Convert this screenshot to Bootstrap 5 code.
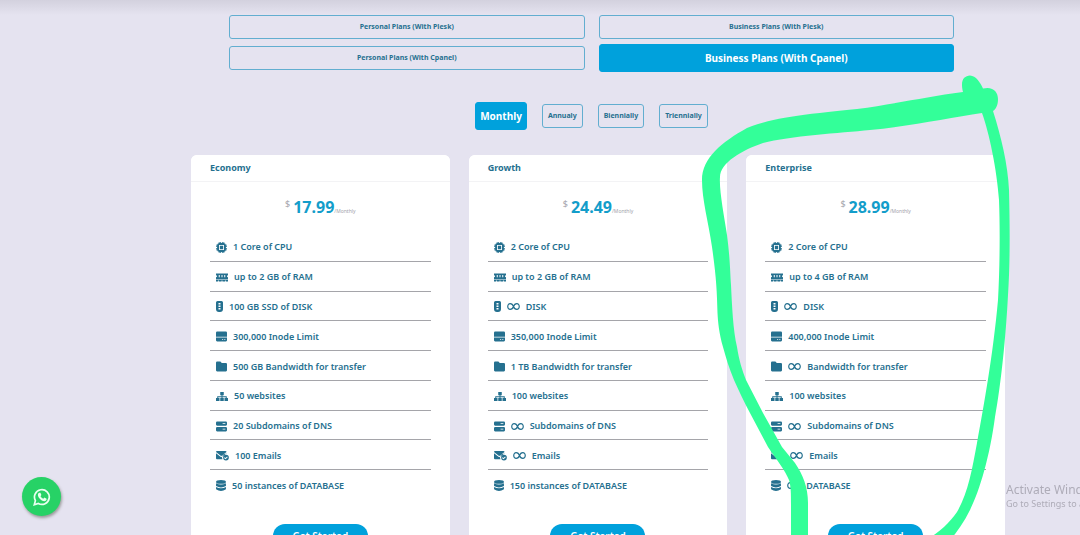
<!DOCTYPE html>
<html lang="en">
<head>
<meta charset="utf-8">
<meta name="viewport" content="width=device-width, initial-scale=1">
<title>Hosting plans</title>
<link href="https://cdn.jsdelivr.net/npm/bootstrap@5.3.0/dist/css/bootstrap.min.css" rel="stylesheet">
<style>
  :root { --brand: #00a1dc; --ink: #25708f; --page: #e5e3f0; }
  body { background: var(--page); color: var(--ink); font-family: "Noto Sans", "Open Sans", sans-serif; font-size: 9px; line-height: 12px; overflow-x: hidden; }
  .top-shade { height: 15px; background: linear-gradient(#d3d1de, var(--page)); }
  .plans { padding-left: 191px; padding-right: 75px; }
  .plan-types { display: grid; grid-template-columns: 1fr 1fr; column-gap: 14px; row-gap: 5px; padding: 0 51px 0 38px; align-items: center; }
  .pick { --bs-btn-color: var(--ink); --bs-btn-border-color: #62aed0; --bs-btn-hover-bg: var(--brand); --bs-btn-hover-color: #fff; --bs-btn-padding-x: 5px; --bs-btn-padding-y: 0px; --bs-btn-border-radius: 3px; --bs-btn-font-size: 7px; --bs-btn-font-weight: 700; --bs-btn-line-height: 22px; --bs-btn-active-bg: var(--brand); --bs-btn-active-border-color: var(--brand); --bs-btn-active-color: #fff; }
  .pick.active { --bs-btn-font-size: 10px; --bs-btn-line-height: 26px; --bs-btn-padding-x: 4px; }
  .periods { gap: 15px; margin: 30px 13px 25px 0; }
  .plan-grid { column-gap: 19px; display: grid; grid-template-columns: repeat(3, 1fr); }
  .plan { --bs-card-border-width: 0; --bs-card-border-radius: 6px; --bs-card-inner-border-radius: 6px; --bs-card-cap-bg: #fff; --bs-card-cap-padding-x: 19px; --bs-card-cap-padding-y: 7px; --bs-card-spacer-x: 19px; --bs-card-spacer-y: 0px; }
  .plan .card-header { border-bottom: 1px solid #f3f3f5; }
  .plan h2 { font-size: 9px; line-height: 12px; font-weight: 700; color: var(--ink); }
  .price { height: 50px; color: #a3a3ab; }
  .price strong { font-size: 16px; line-height: 20px; color: #139dca; margin-left: 3px; }
  .price .coin { font-size: 9px; align-self: flex-start; margin-top: 16px; }
  .price .per { font-size: 5px; }
  .features { height: 267px; font-weight: 600; color: var(--ink); }
  .features li { display: flex; flex: 1 1 0; align-items: center; gap: 6px; padding: 2px 0 0 6px; border-bottom: 1px solid #a5a5aa; white-space: nowrap; }
  .features li:last-child { border-bottom: 0; }
  .features svg { height: 11px; flex: none; fill: currentColor; }
  .start { --bs-btn-bg: var(--brand); --bs-btn-color: #fff; --bs-btn-border-width: 0; --bs-btn-border-radius: 12px; --bs-btn-font-size: 10px; --bs-btn-font-weight: 600; --bs-btn-line-height: 24px; --bs-btn-padding-y: 0px; --bs-btn-padding-x: 4px; --bs-btn-hover-bg: #0088bd; --bs-btn-hover-color: #fff; width: 95px; margin: 25px auto 24px; }
  .marker { position: absolute; left: 0; top: 0; pointer-events: none; z-index: 5; }
  .chat { position: fixed; left: 22px; bottom: 19px; width: 39px; height: 39px; background: #27d266; box-shadow: 1px 2px 3px #999; z-index: 6; }
  .notice { position: fixed; left: 1006px; bottom: 25px; color: #aeacb8; white-space: nowrap; font-size: 9px; }
  .notice b { display: block; font-size: 12px; line-height: 16px; font-weight: 400; }
</style>
</head>
<body>
<svg width="0" height="0" class="d-none">
  <symbol id="cpu" viewBox="0 0 20 20"><path fill-rule="evenodd" d="M5 0h1.500v2h1.200V0h1.500v2h1.600V0h1.500v2h1.200V0H15v2.200A3 3 0 0 1 17.800 5H20v1.500h-2v1.200h2v1.500h-2v1.600h2v1.500h-2v1.200h2V15h-2.200A3 3 0 0 1 15 17.800V20h-1.500v-2h-1.200v2h-1.500v-2H9.200v2H7.700v-2H6.500v2H5v-2.200A3 3 0 0 1 2.200 15H0v-1.500h2v-1.200H0v-1.500h2V9.200H0V7.700h2V6.500H0V5h2.200A3 3 0 0 1 5 2.200zM5.500 5.500v9h9v-9zM7 7h6v6H7z"/></symbol>
  <symbol id="ram" viewBox="0 0 24 20"><path fill-rule="evenodd" d="M0 2h24v3.500a2 2 0 0 0 0 4V13H0V9.500a2 2 0 0 0 0-4zM5.500 5v4.500h2V5zM11 5v4.500h2V5zM16.500 5v4.500h2V5zM0 14h24v4h-4v-2h-1.500v2h-5.700v-2h-1.600v2H5.500v-2H4v2H0z"/></symbol>
  <symbol id="disk" viewBox="0 0 14 22"><path fill-rule="evenodd" d="M3 0h8a3 3 0 0 1 3 3v13a6 6 0 0 1-6 6H6a6 6 0 0 1-6-6V3a3 3 0 0 1 3-3zM5 4v3h4V4zM5 9v3h4V9zM5 14v3h4v-3z"/></symbol>
  <symbol id="inode" viewBox="0 0 20 20"><path fill-rule="evenodd" d="M2 1h16a2 2 0 0 1 2 2v7.500H0V3a2 2 0 0 1 2-2zM0 12h20v5a2 2 0 0 1-2 2H2a2 2 0 0 1-2-2zM11 14.500V16h2v-1.500zM15 14.500V16h2v-1.500z"/></symbol>
  <symbol id="folder" viewBox="0 0 20 20"><path d="M2 1h6l2.500 2.500H18a2 2 0 0 1 2 2V17a2 2 0 0 1-2 2H2a2 2 0 0 1-2-2V3a2 2 0 0 1 2-2z"/></symbol>
  <symbol id="sites" viewBox="0 0 24 20"><path d="M8.500 1h7v6.500H13V9.500h8.500v3.500H24v6h-7v-6h2.500v-1.500H13V13h2.500v6h-7v-6H11v-1.500H4.500V13H7v6H0v-6h2.500V9.500H11v-2H8.500z"/></symbol>
  <symbol id="dns" viewBox="0 0 20 20"><path fill-rule="evenodd" d="M2 1h16a2 2 0 0 1 2 2v3.500a2 2 0 0 1-2 2H2a2 2 0 0 1-2-2V3a2 2 0 0 1 2-2zM12 4v1.500h5V4zM2 11h16a2 2 0 0 1 2 2v4a2 2 0 0 1-2 2H2a2 2 0 0 1-2-2v-4a2 2 0 0 1 2-2zM12 14v1.500h5V14z"/></symbol>
  <symbol id="mail" viewBox="0 0 26 20"><path d="M2 1h17a2 2 0 0 1 2 2l-9.500 7.500a2 2 0 0 1-2 0L0 3a2 2 0 0 1 2-2z"/><path d="M0 5.500l9 7q1.500 1 3 0l9-6.500v1a7 7 0 0 0-8 10.500H2a2 2 0 0 1-2-2z"/><path fill-rule="evenodd" d="M20 8.500a5.700 5.700 0 1 1 0 11.400 5.700 5.700 0 0 1 0-11.400zM17.500 13.500L16 15l3 2.700 4.500-4.200-1.300-1.300-3.200 2.800z"/></symbol>
  <symbol id="db" viewBox="0 0 18 20"><ellipse cx="9" cy="3.500" rx="9" ry="3.500"/><path d="M0 5.800q9 5 18 0V11q-9 5-18 0zM0 12.500q9 5 18 0v4.200q-9 6.500-18 0z"/></symbol>
  <symbol id="inf" viewBox="0 0 26 20"><path fill="none" stroke="currentColor" stroke-width="2.400" d="M13 10C10.500 2.500 1.500 2 1.500 10S10.500 17.500 13 10 24.500 2 24.500 10 15.500 17.500 13 10z"/></symbol>
</svg>

<div class="top-shade"></div>
<main class="plans">
  <div class="plan-types">
    <button type="button" class="btn pick">Personal Plans (With Plesk)</button>
    <button type="button" class="btn pick">Business Plans (With Plesk)</button>
    <button type="button" class="btn pick">Personal Plans (With Cpanel)</button>
    <button type="button" class="btn pick active">Business Plans (With Cpanel)</button>
  </div>
  <div class="periods d-flex justify-content-center align-items-center">
    <button type="button" class="btn pick active">Monthly</button>
    <button type="button" class="btn pick">Annualy</button>
    <button type="button" class="btn pick">Biennially</button>
    <button type="button" class="btn pick">Triennially</button>
  </div>
  <div class="plan-grid">
    <section class="card plan">
      <div class="card-header"><h2 class="m-0">Economy</h2></div>
      <div class="card-body d-flex flex-column">
        <div class="price d-flex justify-content-center align-items-center"><span class="coin">$</span><strong>17.99</strong><span class="per mt-2">/Monthly</span></div>
        <ul class="features list-unstyled d-flex flex-column m-0">
          <li><svg width="11"><use href="#cpu"/></svg>1 Core of CPU</li>
          <li><svg width="12"><use href="#ram"/></svg>up to 2 GB of RAM</li>
          <li><svg width="7"><use href="#disk"/></svg>100 GB SSD of DISK</li>
          <li><svg width="11"><use href="#inode"/></svg>300,000 Inode Limit</li>
          <li><svg width="11"><use href="#folder"/></svg>500 GB Bandwidth for transfer</li>
          <li><svg width="12"><use href="#sites"/></svg>50 websites</li>
          <li><svg width="11"><use href="#dns"/></svg>20 Subdomains of DNS</li>
          <li><svg width="13"><use href="#mail"/></svg>100 Emails</li>
          <li><svg width="10"><use href="#db"/></svg>50 instances of DATABASE</li>
        </ul>
        <button type="button" class="btn start">Get Started</button>
      </div>
    </section>
    <section class="card plan">
      <div class="card-header"><h2 class="m-0">Growth</h2></div>
      <div class="card-body d-flex flex-column">
        <div class="price d-flex justify-content-center align-items-center"><span class="coin">$</span><strong>24.49</strong><span class="per mt-2">/Monthly</span></div>
        <ul class="features list-unstyled d-flex flex-column m-0">
          <li><svg width="11"><use href="#cpu"/></svg>2 Core of CPU</li>
          <li><svg width="12"><use href="#ram"/></svg>up to 2 GB of RAM</li>
          <li><svg width="7"><use href="#disk"/></svg><svg width="13"><use href="#inf"/></svg>DISK</li>
          <li><svg width="11"><use href="#inode"/></svg>350,000 Inode Limit</li>
          <li><svg width="11"><use href="#folder"/></svg>1 TB Bandwidth for transfer</li>
          <li><svg width="12"><use href="#sites"/></svg>100 websites</li>
          <li><svg width="11"><use href="#dns"/></svg><svg width="13"><use href="#inf"/></svg>Subdomains of DNS</li>
          <li><svg width="13"><use href="#mail"/></svg><svg width="13"><use href="#inf"/></svg>Emails</li>
          <li><svg width="10"><use href="#db"/></svg>150 instances of DATABASE</li>
        </ul>
        <button type="button" class="btn start">Get Started</button>
      </div>
    </section>
    <section class="card plan">
      <div class="card-header"><h2 class="m-0">Enterprise</h2></div>
      <div class="card-body d-flex flex-column">
        <div class="price d-flex justify-content-center align-items-center"><span class="coin">$</span><strong>28.99</strong><span class="per mt-2">/Monthly</span></div>
        <ul class="features list-unstyled d-flex flex-column m-0">
          <li><svg width="11"><use href="#cpu"/></svg>2 Core of CPU</li>
          <li><svg width="12"><use href="#ram"/></svg>up to 4 GB of RAM</li>
          <li><svg width="7"><use href="#disk"/></svg><svg width="13"><use href="#inf"/></svg>DISK</li>
          <li><svg width="11"><use href="#inode"/></svg>400,000 Inode Limit</li>
          <li><svg width="11"><use href="#folder"/></svg><svg width="13"><use href="#inf"/></svg>Bandwidth for transfer</li>
          <li><svg width="12"><use href="#sites"/></svg>100 websites</li>
          <li><svg width="11"><use href="#dns"/></svg><svg width="13"><use href="#inf"/></svg>Subdomains of DNS</li>
          <li><svg width="13"><use href="#mail"/></svg><svg width="13"><use href="#inf"/></svg>Emails</li>
          <li><svg width="10"><use href="#db"/></svg><svg width="13"><use href="#inf"/></svg>DATABASE</li>
        </ul>
        <button type="button" class="btn start">Get Started</button>
      </div>
    </section>
  </div>
</main>

<!-- Hand-drawn highlight round the Enterprise plan -->
<svg class="marker" width="1080" height="560" viewBox="0 0 1080 560" aria-hidden="true">
  <path fill="#33ff99" d="M791 560V505C791 494 791 486 789 480C785 470 776 459 768 447L750 413C744 402 739 391 734 380C729 368 726 358 723 347C719 333 718 322 717.500 313C717 290 716 275 712 247C708 220 702 200 702 180C702 158 722 142 747 128C775 117 800 115 857 109C895 104 925 97 963 92C960 80 964 76 970 75.500C976 76 980 82 983 88.500C993 86 998 92 998 99C998 105 996 109 993 111C1001 136 1008 165 1009 190C1010 230 1010 265 1008 295C1006 335 1001 385 995 417C990 455 980 490 970 510C964 522 957 532 950 540L925 541C940 532 950 522 957 512C968 493 972 470 977 443C984 405 993 355 998 300C1000 265 1000 225 999 200C997 170 989 132 982 113C950 118 910 126 870 130C840 133 790 136 763 143C742 150 720 163 720 177C719 190 724 215 727 235C730 258 730 270 731 285C732 305 733 330 737 347C739 360 742 370 746 380L763 413L782 447L795 463C803 475 808 487 808 503V560Z"/>
</svg>

<div class="notice"><b>Activate Windows</b>Go to Settings to activate Windows.</div>
<a href="#chat" class="chat rounded-circle d-flex align-items-center justify-content-center" aria-label="WhatsApp">
  <svg width="18" height="18" viewBox="0 0 18 18"><path fill="none" stroke="#e9fff0" stroke-width="1.700" d="M1.300 16.700l1.100-4.100a7.400 7.400 0 1 1 2.900 2.900z"/><path fill="#e9fff0" d="M6.300 4.700l1.100.1 1 2.200-.9 1.200c.7 1.300 1.500 2 2.800 2.600l1.100-1.200 2.200 1.100c.2 1.600-1 2.500-2.300 2.500C8 12.800 5 9.400 4.900 7c0-1 .6-2.100 1.400-2.300z"/></svg>
</a>
<script src="https://cdn.jsdelivr.net/npm/bootstrap@5.3.0/dist/js/bootstrap.bundle.min.js"></script>
</body>
</html>
